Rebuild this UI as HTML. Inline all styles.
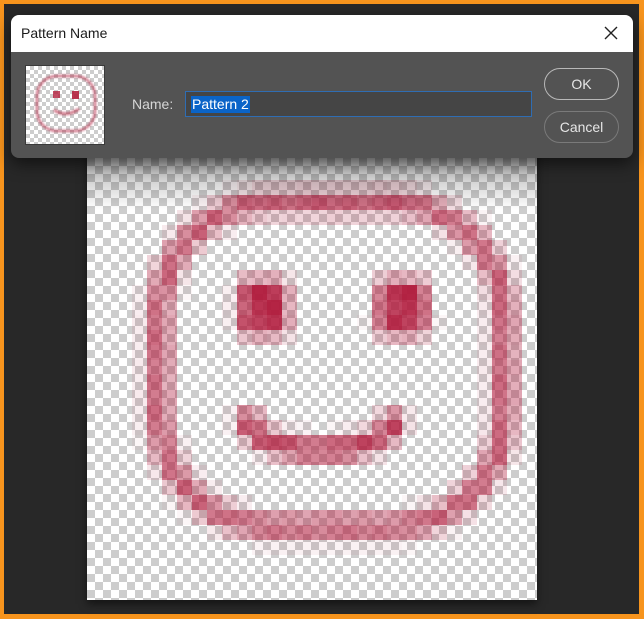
<!DOCTYPE html>
<html><head><meta charset="utf-8"><style>
html,body{margin:0;padding:0}
body{width:644px;height:619px;position:relative;overflow:hidden;background:#f7941d;font-family:"Liberation Sans",sans-serif}
#bg{position:absolute;left:4px;top:4px;width:635px;height:610px;background:#282828}
#canvas{position:absolute;left:87px;top:150px;width:450px;height:450px;
background-color:#fff;background-image:linear-gradient(45deg,#cdcdcd 25%,transparent 25%,transparent 75%,#cdcdcd 75%),linear-gradient(45deg,#cdcdcd 25%,transparent 25%,transparent 75%,#cdcdcd 75%);
background-size:16px 16px;background-position:0 0,8px 8px;box-shadow:0 4px 8px rgba(0,0,0,.5)}
#shade{position:absolute;left:87px;top:150px;width:450px;height:60px;background:linear-gradient(rgba(0,0,0,.35),rgba(0,0,0,0))}
#dlg{position:absolute;left:11px;top:15px;width:622px;height:143px;border-radius:8px;overflow:hidden;background:#535353;box-shadow:0 6px 16px rgba(0,0,0,.55)}
#title{height:37px;background:#fff;font-size:14px;color:#1a1a1a;line-height:37px;padding-left:10px}
#x{position:absolute;right:14px;top:10px}
#thumb{position:absolute;left:14px;top:50px;width:78px;height:78px;border:1px solid #3a3a3a;
background-color:#fff;background-image:linear-gradient(45deg,#cdcdcd 25%,transparent 25%,transparent 75%,#cdcdcd 75%),linear-gradient(45deg,#cdcdcd 25%,transparent 25%,transparent 75%,#cdcdcd 75%);background-size:8px 8px;background-position:0 0,4px 4px}
#lbl{position:absolute;left:121px;top:81px;color:#d6d6d6;font-size:14px}
#inp{position:absolute;left:174px;top:76px;width:345px;height:24px;background:#454545;border:1px solid #2f6db3}
#sel{position:absolute;left:5px;top:4px;background:#0a64c8;color:#fff;font-size:14px;line-height:17px;padding:0 1px}
.btn{position:absolute;left:533px;width:73px;height:30px;border:1px solid #b9b9b9;border-radius:16px;color:#e6e6e6;font-size:14px;text-align:center;line-height:30px}
#ok{top:53px}
#cancel{top:96px;border-color:#7a7a7a}
</style></head><body>
<div id="bg"></div>
<div id="canvas"><svg id="sm" width="450" height="450" style="position:absolute;left:0;top:0"></svg></div>
<div id="shade"></div>
<div id="dlg">
<div id="title">Pattern Name</div>
<svg id="x" width="16" height="16"><path d="M2 2L14 14M14 2L2 14" stroke="#222" stroke-width="1.4"/></svg>
<div id="thumb"><svg width="78" height="78"><defs><filter id="b"><feGaussianBlur stdDeviation="1"/></filter></defs>
<g fill="none" stroke="#b21f3c" stroke-opacity=".6" filter="url(#b)">
<rect x="11" y="10" width="58" height="55" rx="20" stroke-width="2.5"/>
<path d="M28 44Q40 52 53 43" stroke-width="3"/></g>
<rect x="27" y="25" width="7" height="7" fill="#b21f3c" opacity=".8"/><rect x="46" y="25" width="7" height="8" fill="#b21f3c" opacity=".9"/>
</svg></div>
<div id="lbl">Name:</div>
<div id="inp"><span id="sel">Pattern 2</span></div>
<div class="btn" id="ok">OK</div>
<div class="btn" id="cancel">Cancel</div>
</div>
<script>
(function(){
var s=document.getElementById('sm'),h='';
function rr(x,y){var cx=16.3,cy=14.3,hx=11.5,hy=10.8,r=7.5;
var qx=Math.abs(x-cx)-(hx-r),qy=Math.abs(y-cy)-(hy-r);
var o=Math.sqrt(Math.max(qx,0)*Math.max(qx,0)+Math.max(qy,0)*Math.max(qy,0))+Math.min(Math.max(qx,qy),0)-r;return Math.abs(o);}
function box(x,y,x0,y0,x1,y1){var dx=Math.max(x0-x,0,x-x1),dy=Math.max(y0-y,0,y-y1);return Math.sqrt(dx*dx+dy*dy);}
function smile(x,y){var best=99;for(var t=0;t<=1;t+=0.02){
var a=(t-0.5)*Math.PI;var px=15.6+Math.sin(a)*4.8;var py=18.0+Math.cos(a)*2.0;
var d=Math.hypot(x-px,y-py);if(d<best)best=d;}return best;}
for(var i=0;i<30;i++)for(var j=0;j<30;j++){var x=i+.5,y=j+.5;
var a=Math.exp(-Math.pow(rr(x,y)/0.9,2))*0.72;
var e=Math.min(box(x,y,10.9,9.4,12.6,11.6),box(x,y,20.1,9.4,21.9,11.6));a=Math.max(a,Math.exp(-Math.pow(e/0.9,2))*0.95);
a=Math.max(a,Math.exp(-Math.pow(smile(x,y)/0.85,2))*0.88);
a*=0.85+0.15*(((i*7+j*13)%5)/4);
if(a>0.04)h+='<rect x="'+i*15+'" y="'+j*15+'" width="15" height="15" fill="#b0183a" fill-opacity="'+a.toFixed(2)+'"/>';}
s.innerHTML=h;})();
</script>
</body></html>
